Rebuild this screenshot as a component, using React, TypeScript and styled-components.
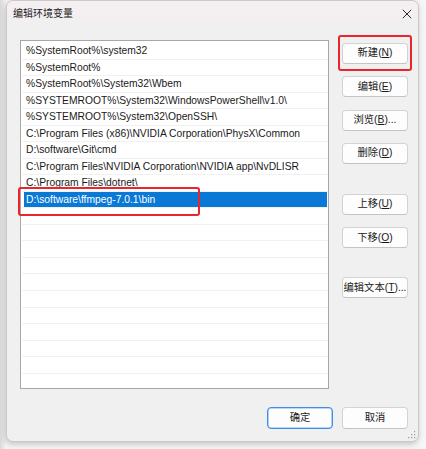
import React from "react";
import styled, { createGlobalStyle } from "styled-components";

const Global = createGlobalStyle`
  html, body { margin: 0; padding: 0; background: #f7f7f7; }
  * { box-sizing: border-box; }
  body { font-family: "Liberation Sans", "Noto Sans CJK SC", sans-serif; }
`;

const Stage = styled.div`
  width: 426px;
  height: 449px;
  padding: 0 7px 7px 6px;
  background: linear-gradient(90deg, #d9d9d9 0px, #f6f6f6 6px);
`;

const Window = styled.div`
  position: relative;
  width: 413px;
  height: 442px;
  display: flex;
  flex-direction: column;
  background: #f0f0f0;
  border: 1px solid #c9c9c9;
  border-radius: 7px;
  box-shadow: -1px 2px 6px rgba(0, 0, 0, 0.22);
  overflow: visible;
`;

const TitleBar = styled.div`
  height: 24px;
  flex: none;
  display: flex;
  align-items: center;
  justify-content: space-between;
  padding: 0 6px 0 6px;
  background: linear-gradient(180deg, #f6eff2 0%, #f3eff1 70%, #f0f0f0 100%);
  border-radius: 7px 7px 0 0;
`;

const Title = styled.span`
  font-family: "Noto Sans CJK SC", sans-serif;
  font-size: 10px;
  color: #1b1b1b;
  line-height: 1;
`;

const Close = styled.svg`
  width: 10px;
  height: 10px;
  margin-top: 1px;
`;

const Body = styled.div`
  flex: 1;
  display: flex;
  flex-direction: column;
  padding: 15px 10px 12px 13px;
`;

const Main = styled.div`
  display: flex;
  gap: 13px;
  height: 349px;
`;

const List = styled.div`
  width: 309px;
  height: 349px;
  flex: none;
  background: #ffffff;
  border: 1px solid #a7a7a7;
  padding: 2px 0 0 1px;
`;

const Row = styled.div`
  position: relative;
  height: 16.54px;
  display: flex;
  padding-left: 2px;
  padding-right: 1px;
  border-bottom: 1px solid #f1f1f1;
`;

const RowText = styled.div<{ $selected?: boolean }>`
  flex: 1;
  padding-left: 2px;
  font-size: 10.3px;
  line-height: 15.5px;
  white-space: nowrap;
  color: ${(p) => (p.$selected ? "#ffffff" : "#1a1a1a")};
  background: ${(p) => (p.$selected ? "#0a78d5" : "transparent")};
`;

const RowMark = styled.div`
  position: absolute;
  left: -4px;
  top: -5px;
  width: 182px;
  height: 29px;
  border: 2px solid #e8262b;
  border-radius: 3px;
  pointer-events: none;
`;

const Side = styled.div`
  width: 66px;
  flex: none;
  display: flex;
  flex-direction: column;
  padding-top: 3px;
`;

const Group = styled.div<{ $gapTop?: number }>`
  display: flex;
  flex-direction: column;
  gap: 12.3px;
  margin-top: ${(p) => p.$gapTop ?? 0}px;
`;

const Btn = styled.button<{ $marked?: boolean; $default?: boolean; $h?: number }>`
  position: relative;
  width: 66px;
  height: ${(p) => p.$h ?? 21}px;
  padding: 0;
  margin: 0;
  background: #fdfdfd;
  border: 1px solid ${(p) => (p.$default ? "#3f8fe3" : "#d3d3d3")};
  border-bottom-color: ${(p) => (p.$default ? "#3f8fe3" : "#c4c4c4")};
  box-shadow: ${(p) => (p.$default ? "inset 0 0 0 0.6px #7fb4ec" : "none")};
  border-radius: 4px;
  font-family: "Liberation Sans", "Noto Sans CJK SC", sans-serif;
  font-size: 10.3px;
  color: #1b1b1b;
  line-height: 1;
  display: flex;
  align-items: center;
  justify-content: center;
  white-space: nowrap;
  &::after {
    content: "";
    display: ${(p) => (p.$marked ? "block" : "none")};
    position: absolute;
    left: -5px;
    right: -5px;
    top: -9px;
    bottom: -8px;
    border: 2px solid #e8262b;
    border-radius: 3px;
  }
  u { text-decoration-thickness: 1px; text-underline-offset: 1px; }
`;

const Footer = styled.div`
  margin-top: 18px;
  display: flex;
  justify-content: flex-end;
  gap: 9px;
`;

const Grip = styled.svg`
  position: absolute;
  right: 2px;
  bottom: 2px;
  width: 8px;
  height: 8px;
`;

const paths = [
  "%SystemRoot%\\system32",
  "%SystemRoot%",
  "%SystemRoot%\\System32\\Wbem",
  "%SYSTEMROOT%\\System32\\WindowsPowerShell\\v1.0\\",
  "%SYSTEMROOT%\\System32\\OpenSSH\\",
  "C:\\Program Files (x86)\\NVIDIA Corporation\\PhysX\\Common",
  "D:\\software\\Git\\cmd",
  "C:\\Program Files\\NVIDIA Corporation\\NVIDIA app\\NvDLISR",
  "C:\\Program Files\\dotnet\\",
  "D:\\software\\ffmpeg-7.0.1\\bin",
];

const SELECTED = 9;
const ROWS = 20;

export default function App() {
  const rows = Array.from({ length: ROWS }, (_, i) => paths[i] ?? "");
  return (
    <>
      <Global />
      <Stage>
        <Window>
          <TitleBar>
            <Title>编辑环境变量</Title>
            <Close viewBox="0 0 10 10">
              <path d="M0.8 0.8 L9.2 9.2 M9.2 0.8 L0.8 9.2" stroke="#2a2a2a" strokeWidth="1" fill="none" />
            </Close>
          </TitleBar>
          <Body>
            <Main>
              <List>
                {rows.map((t, i) => (
                  <Row key={i}>
                    <RowText $selected={i === SELECTED}>{t}</RowText>
                    {i === SELECTED && <RowMark />}
                  </Row>
                ))}
              </List>
              <Side>
                <Group>
                  <Btn $marked>新建(<u>N</u>)</Btn>
                  <Btn>编辑(<u>E</u>)</Btn>
                  <Btn>浏览(<u>B</u>)...</Btn>
                  <Btn>删除(<u>D</u>)</Btn>
                </Group>
                <Group $gapTop={30}>
                  <Btn>上移(<u>U</u>)</Btn>
                  <Btn>下移(<u>O</u>)</Btn>
                </Group>
                <Group $gapTop={29}>
                  <Btn>编辑文本(<u>T</u>)...</Btn>
                </Group>
              </Side>
            </Main>
            <Footer>
              <Btn $default $h={22}>确定</Btn>
              <Btn $h={22}>取消</Btn>
            </Footer>
          </Body>
          <Grip viewBox="0 0 8 8">
            <rect x="6" y="0" width="1.2" height="1.2" fill="#9a9a9a" />
            <rect x="3" y="3" width="1.2" height="1.2" fill="#9a9a9a" />
            <rect x="6" y="3" width="1.2" height="1.2" fill="#9a9a9a" />
            <rect x="0" y="6" width="1.2" height="1.2" fill="#9a9a9a" />
            <rect x="3" y="6" width="1.2" height="1.2" fill="#9a9a9a" />
            <rect x="6" y="6" width="1.2" height="1.2" fill="#9a9a9a" />
          </Grip>
        </Window>
      </Stage>
    </>
  );
}
